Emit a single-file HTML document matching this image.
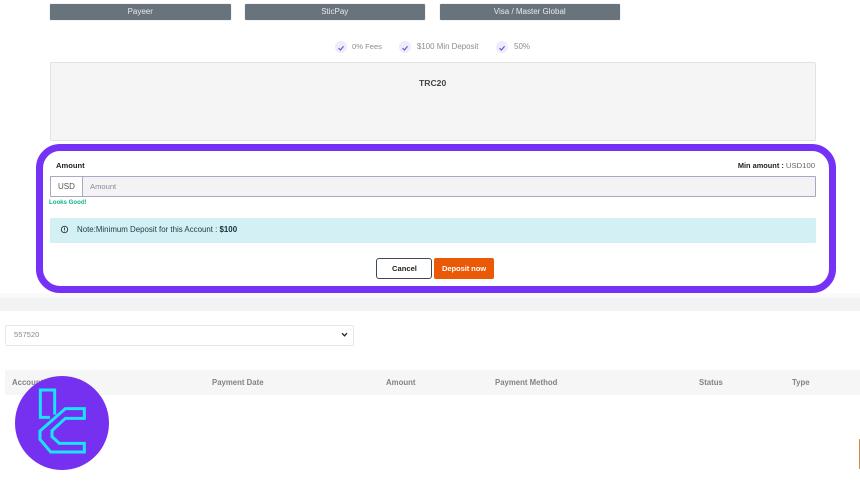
<!DOCTYPE html>
<html lang="en">
<head>
<meta charset="utf-8">
<title>Deposit</title>
<style>
html,body{margin:0;padding:0;background:#fff}
body{width:860px;height:484px;position:relative;overflow:hidden;font-family:"Liberation Sans",sans-serif;color:#333}
.a{position:absolute;box-sizing:border-box}
.t{position:absolute;white-space:nowrap;line-height:12px;filter:blur(.25px)}
.btn{background:#69737c;color:#e8eaec;font-size:8px;line-height:16px;text-align:center;top:4px;height:15.5px;width:180.5px;border-radius:1px;box-shadow:0 0 1px #aab}
.chk{position:absolute;top:41px;width:12px;height:12px;border-radius:50%;background:#efecfb}
.hd{position:absolute;top:377px;font-size:7.8px;line-height:11px;color:#666;font-weight:bold;opacity:.8;white-space:nowrap;filter:blur(.25px)}
</style>
</head>
<body>
<div class="a btn" style="left:50px">Payeer</div>
<div class="a btn" style="left:244.5px">SticPay</div>
<div class="a btn" style="left:439.5px">Visa / Master Global</div>

<div class="chk" style="left:334.5px;top:40.5px"><svg width="12" height="12" viewBox="0 0 12 12"><path d="M3.5 6.2 5.4 8 8.6 4.2" fill="none" stroke="#6f55d8" stroke-width="1.2"/></svg></div>
<div class="t" style="left:352px;top:41px;font-size:7.6px;color:#8d8d8d">0% Fees</div>
<div class="chk" style="left:399px;top:40.5px"><svg width="12" height="12" viewBox="0 0 12 12"><path d="M3.5 6.2 5.4 8 8.6 4.2" fill="none" stroke="#6f55d8" stroke-width="1.2"/></svg></div>
<div class="t" style="left:417px;top:41px;font-size:7.9px;color:#8d8d8d">$100 Min Deposit</div>
<div class="chk" style="left:496px;top:40.5px"><svg width="12" height="12" viewBox="0 0 12 12"><path d="M3.5 6.2 5.4 8 8.6 4.2" fill="none" stroke="#6f55d8" stroke-width="1.2"/></svg></div>
<div class="t" style="left:514px;top:41px;font-size:8px;color:#8d8d8d">50%</div>

<div class="a" style="left:49.5px;top:61.5px;width:766px;height:79px;background:#f5f5f5;border:1px solid #e2e2e2;border-radius:2px"></div>
<div class="t" style="left:419px;top:77px;font-size:8.6px;font-weight:bold;color:#444">TRC20</div>

<div class="a" style="left:0;top:293px;width:860px;height:5px;background:#fafafa"></div>
<div class="a" style="left:0;top:298px;width:860px;height:13px;background:#f1f2f3"></div>

<div class="a" style="left:36px;top:144px;width:800px;height:149px;background:#fff;border:7px solid #7531f5;border-radius:24px"></div>

<div class="t" style="left:56px;top:160px;font-size:7.6px;font-weight:bold;color:#222">Amount</div>
<div class="t" style="right:45px;top:160px;font-size:7.7px;color:#666"><b style="color:#222;font-size:7.4px">Min amount :</b> USD100</div>

<div class="a" style="left:49.5px;top:176px;width:766px;height:21px;background:#f3f3f3;border:1px solid #a9a6c9;border-radius:1px"></div>
<div class="a" style="left:49.5px;top:176px;width:33px;height:21px;background:#fff;border:1px solid #a9a9bf;border-radius:1px 0 0 1px"></div>
<div class="t" style="left:58px;top:181px;font-size:8px;color:#555">USD</div>
<div class="t" style="left:90px;top:181px;font-size:7.6px;color:#8a8a9a">Amount</div>
<div class="t" style="left:49px;top:197px;font-size:6.1px;font-weight:bold;color:#12b48c">Looks Good!</div>

<div class="a" style="left:49.5px;top:217.5px;width:766px;height:25px;background:#d3f0f5;border-radius:1px"></div>
<svg class="a" style="left:60px;top:225px" width="9" height="9" viewBox="0 0 9 9"><circle cx="4.5" cy="4.5" r="3.2" fill="none" stroke="#333" stroke-width=".9"/><path d="M4.5 2.6V5M4.5 5.6v.8" stroke="#333" stroke-width=".9"/></svg>
<div class="t" style="left:77px;top:224px;font-size:7.9px;color:#1f3a44">Note:Minimum Deposit for this Account : <b style="font-weight:bold;color:#12303a">$100</b></div>

<div class="a" style="left:376px;top:258px;width:56px;height:21px;background:#fff;border:1.3px solid #3d4a55;border-radius:3px"></div>
<div class="t" style="left:392px;top:263px;font-size:7.6px;font-weight:bold;color:#222;filter:none">Cancel</div>
<div class="a" style="left:434px;top:258px;width:60px;height:21px;background:#ea5906;border-radius:2px"></div>
<div class="t" style="left:442px;top:263px;font-size:7.6px;font-weight:bold;color:#fff;letter-spacing:-.1px;filter:none">Deposit now</div>

<div class="a" style="left:5px;top:325px;width:348.5px;height:20.5px;background:#fff;border:1px solid #e6e6e6;border-radius:2px"></div>
<div class="t" style="left:14px;top:329px;font-size:7.6px;color:#888">557520</div>
<svg class="a" style="left:341px;top:331px" width="7" height="7" viewBox="0 0 7 7"><path d="M1 2.2 3.5 4.8 6 2.2" fill="none" stroke="#222" stroke-width="1.3"/></svg>

<div class="a" style="left:5px;top:370px;width:855px;height:25px;background:#f6f6f6"></div>
<div class="hd" style="left:12px">Account</div>
<div class="hd" style="left:212px">Payment Date</div>
<div class="hd" style="left:386px">Amount</div>
<div class="hd" style="left:495px">Payment Method</div>
<div class="hd" style="left:699px">Status</div>
<div class="hd" style="left:792px">Type</div>

<div class="a" style="left:859px;top:439px;width:1px;height:30px;background:#d08a40"></div>

<div class="a" style="left:15px;top:376px;width:94px;height:93.5px;background:#7630f0;border-radius:50%"></div>
<svg class="a" style="left:30px;top:384px" width="60" height="76" viewBox="0 0 180 228">
<g fill="none" stroke="#19e3ff" stroke-width="9" stroke-linejoin="miter">
<path d="M74 92V18H31V100H60"/>
<path d="M106 74H163V103H106L66 140V158L88 178H163V204H62L30 166V141Z"/>
</g>
</svg>
</body>
</html>
